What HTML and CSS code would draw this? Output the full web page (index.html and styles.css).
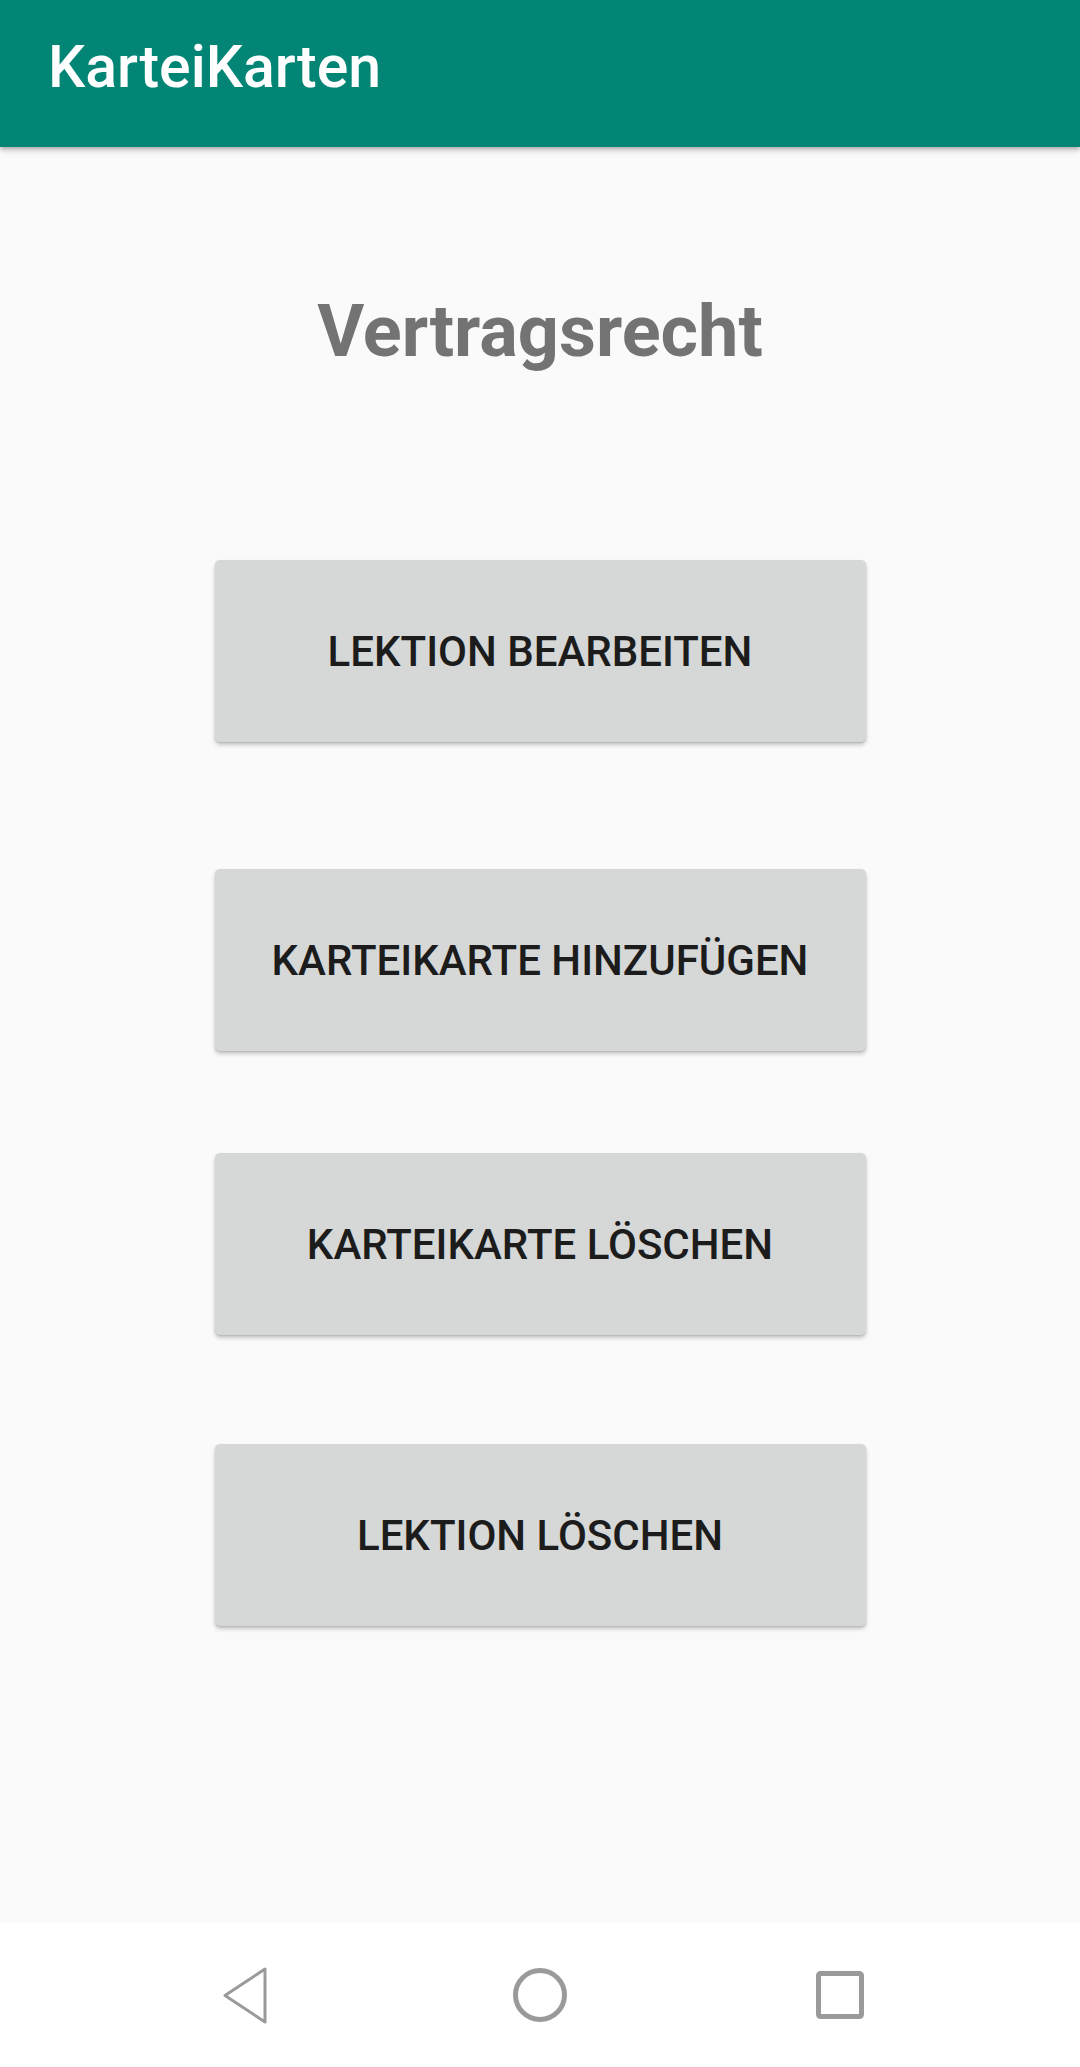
FILE: index.html
```html
<!DOCTYPE html>
<html lang="de">
<head>
<meta charset="utf-8">
<title>KarteiKarten</title>
<link rel="stylesheet" href="styles.css">
</head>
<body>
<div class="screen">
  <header class="appbar">
    <h1 class="appbar-title">KarteiKarten</h1>
  </header>
  <main class="content">
    <h2 class="lesson-title">Vertragsrecht</h2>
    <div class="actions">
      <button class="btn btn-edit">LEKTION BEARBEITEN</button>
      <button class="btn btn-add">KARTEIKARTE HINZUFÜGEN</button>
      <button class="btn btn-del-card">KARTEIKARTE LÖSCHEN</button>
      <button class="btn btn-del-lesson">LEKTION LÖSCHEN</button>
    </div>
  </main>
  <nav class="navbar">
    <svg class="nav-icon nav-back" width="60" height="60" viewBox="0 0 60 60">
      <path d="M44 4 L44 57 L4 30.5 Z" fill="none" stroke="#9a9a9a" stroke-width="3" stroke-linejoin="round"/>
    </svg>
    <svg class="nav-icon nav-home" width="60" height="60" viewBox="0 0 60 60">
      <circle cx="30" cy="30" r="24.5" fill="none" stroke="#9a9a9a" stroke-width="5"/>
    </svg>
    <svg class="nav-icon nav-recent" width="60" height="60" viewBox="0 0 60 60">
      <rect x="8.5" y="8.5" width="43" height="43" rx="2" fill="none" stroke="#9a9a9a" stroke-width="5"/>
    </svg>
  </nav>
</div>
</body>
</html>
```

FILE: styles.css
```css
* { box-sizing: border-box; }

html, body {
  margin: 0;
  padding: 0;
  background: #fafafa;
}

.screen {
  width: 1080px;
  height: 2067px;
  display: flex;
  flex-direction: column;
  font-family: Roboto, "Noto Sans", sans-serif;
  overflow: hidden;
}

.appbar {
  height: 147px;
  flex: 0 0 147px;
  background: #028575;
  box-shadow: 0 3px 6px rgba(0, 0, 0, 0.22), 0 2px 3px rgba(0, 0, 0, 0.12);
  position: relative;
  z-index: 2;
  padding: 37px 0 0 48px;
}

.appbar-title {
  margin: 0;
  color: #ffffff;
  font-size: 59px;
  line-height: 59px;
  font-weight: 500;
}

.content {
  flex: 1 1 auto;
  background: #fafafa;
  display: flex;
  flex-direction: column;
  align-items: center;
}

.lesson-title {
  margin: 149px 0 0 0;
  font-size: 72px;
  line-height: 72px;
  font-weight: 700;
  color: #737373;
}

.actions {
  display: flex;
  flex-direction: column;
  align-items: center;
  margin-top: 192px;
}

.btn {
  width: 651px;
  height: 182px;
  border: none;
  border-radius: 5px;
  background: #d6d7d7;
  color: #1c1c1c;
  font-family: Roboto, "Noto Sans", sans-serif;
  font-weight: 500;
  font-size: 42px;
  letter-spacing: 0;
  box-shadow: 0 3px 4px rgba(0, 0, 0, 0.2), 0 1px 2px rgba(0, 0, 0, 0.12);
  display: flex;
  align-items: center;
  justify-content: center;
  padding: 0;
}

.btn-add { margin-top: 127px; }
.btn-del-card { margin-top: 102px; }
.btn-del-lesson { margin-top: 109px; }

.navbar {
  height: 144px;
  flex: 0 0 144px;
  background: #ffffff;
  display: flex;
  align-items: center;
}

.nav-icon { display: block; }
.nav-back { margin-left: 221px; }
.nav-home { margin-left: 229px; }
.nav-recent { margin-left: 240px; }
```
